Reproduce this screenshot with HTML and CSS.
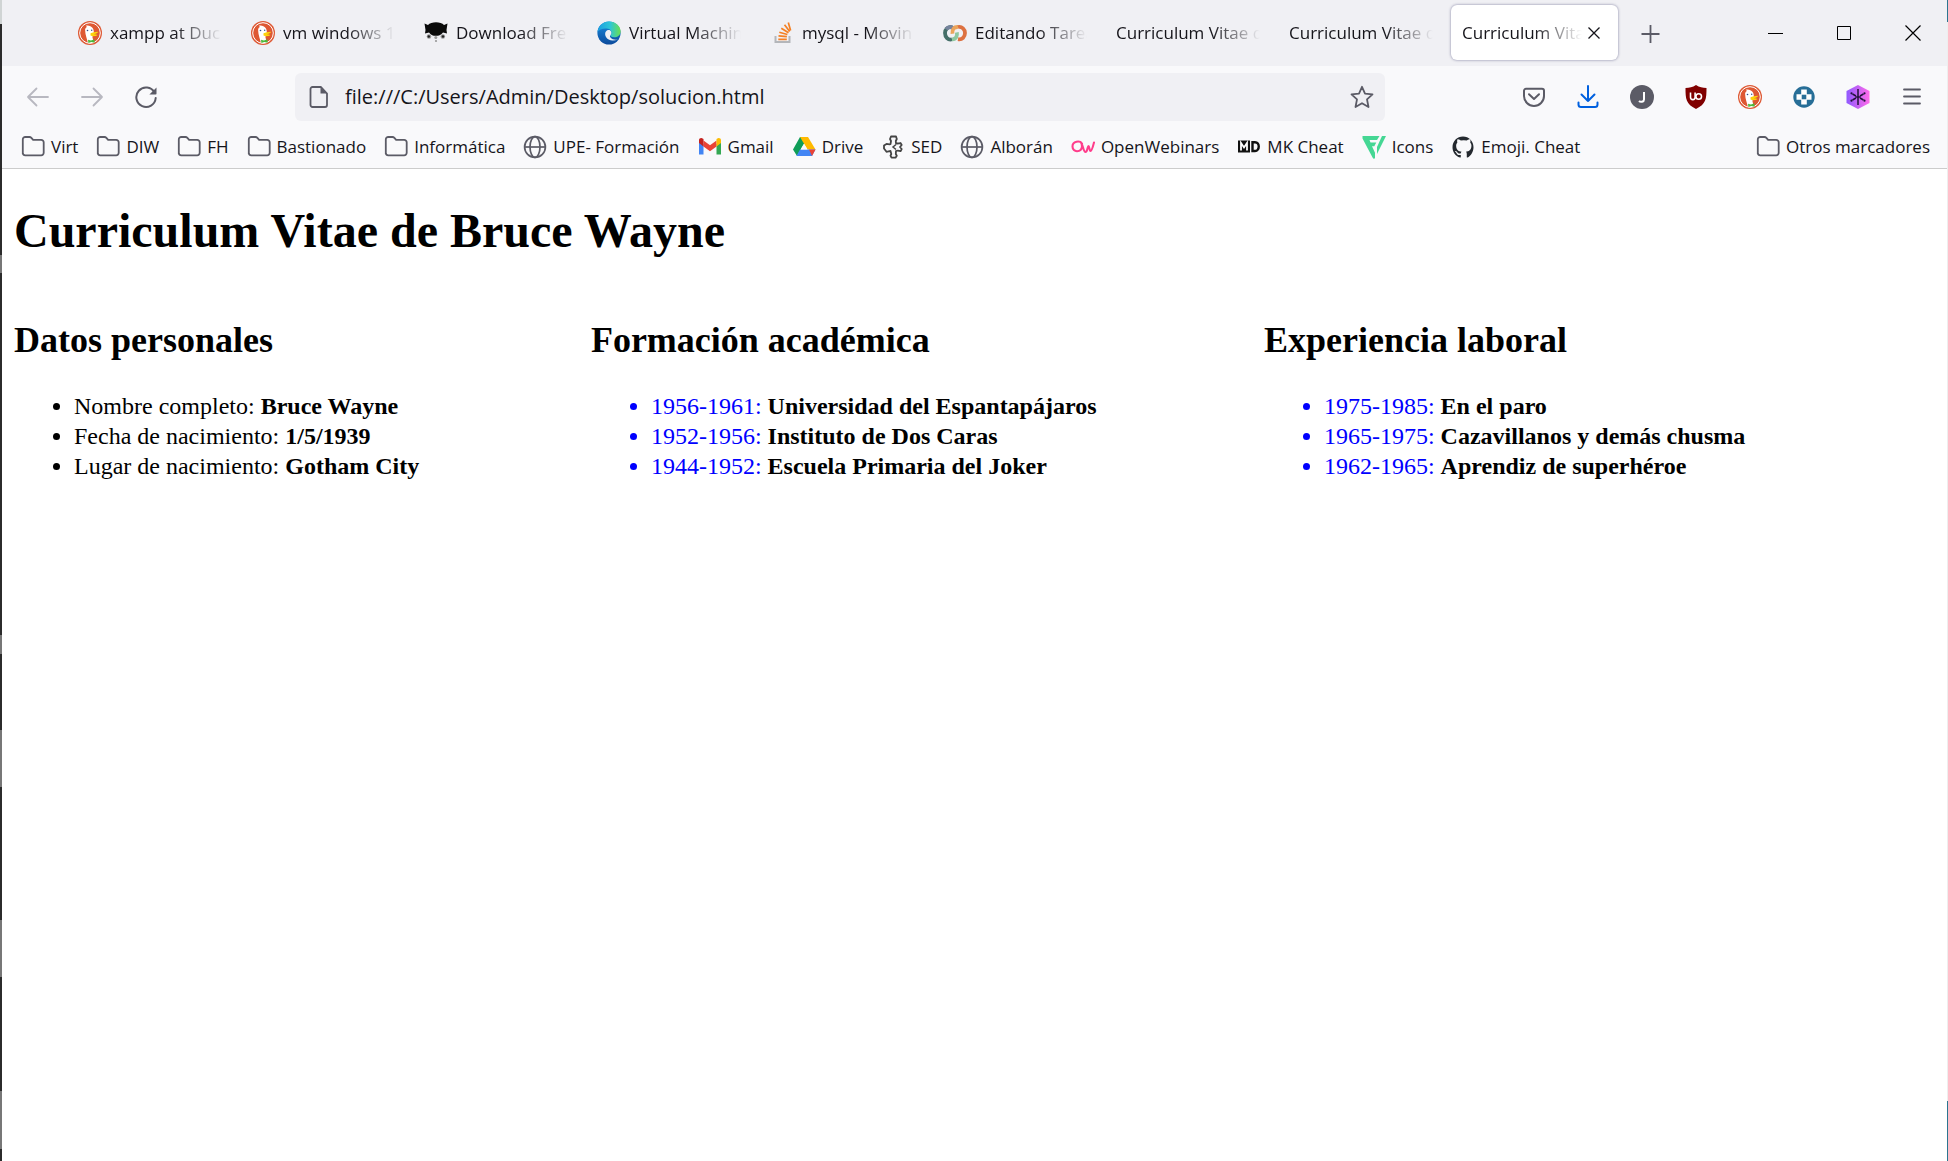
FILE: index.html
```html
<!DOCTYPE html>
<html lang="es">
<head>
<meta charset="utf-8">
<title>Curriculum Vitae de Bruce Wayne</title>
<link rel="stylesheet" href="styles.css">
</head>
<body>
<svg class="sprite" aria-hidden="true">
  <defs>
    <linearGradient id="edge-a" x1="0" y1="0" x2="1" y2="0"><stop offset="0" stop-color="#1b9de2"/><stop offset=".55" stop-color="#2fc6d6"/><stop offset="1" stop-color="#6be04f"/></linearGradient>
    <linearGradient id="edge-b" x1="0" y1="0" x2="0" y2="1"><stop offset="0" stop-color="#1a8ee0"/><stop offset="1" stop-color="#0c4a9c"/></linearGradient>
    <linearGradient id="hex" x1="0" y1="0" x2="1" y2="0"><stop offset="0" stop-color="#9059ff"/><stop offset="1" stop-color="#ff6bea"/></linearGradient>
  </defs>
  <symbol id="i-duck" viewBox="0 0 24 24">
    <circle cx="12" cy="12" r="12" fill="#de5833"/><circle cx="12" cy="12" r="10.3" fill="none" stroke="#fff" stroke-width="1"/>
    <path d="M10 22.2C9 18 7.200 13.500 7.200 10 6.800 8 7.600 6.500 9 6L7.800 4.700c2.700-.6 5.400.3 6.800 2.300 1 1.300 1.300 3 1.200 5l-1.400 4 1.500 6-3.400.3z" fill="#fff"/>
    <path d="M12.500 12.300c1.700-1 5-1 7.300-1.500.8.600-.9 1.800-4.300 2.500 2 .1 3.400.2 4 .7-1.500 1.500-5.200 1.500-7 .4z" fill="#fdd20a"/>
    <path d="M10 18.800l3 .8 3.400-1.400.2 3.600-3.300-.9-2.900 1z" fill="#4cba3c"/>
    <circle cx="9.500" cy="9.500" r=".8" fill="#2d4f8e"/><circle cx="13.700" cy="9.200" r=".7" fill="#2d4f8e"/>
  </symbol>
  <symbol id="i-folder" viewBox="0 0 24 24"><path d="M1.800 19V4.500a2.500 2.500 0 0 1 2.500-2.500h4.200c.8 0 1.400.3 1.900.8l1.700 2h8.100a2.500 2.500 0 0 1 2.500 2.500V17.800a2.500 2.500 0 0 1-2.500 2.500H4.300a2.500 2.500 0 0 1-2.500-2.500z" fill="none" stroke="#5b5b66" stroke-width="1.800"/></symbol>
  <symbol id="i-globe" viewBox="0 0 24 24"><g fill="none" stroke="#5b5b66" stroke-width="1.700"><circle cx="12" cy="12" r="10.400"/><ellipse cx="12" cy="12" rx="5" ry="10.400"/><path d="M1.600 12h20.800"/></g></symbol>
  <symbol id="i-close" viewBox="0 0 24 24"><path d="M6.500 6.500l11 11m0-11l-11 11" fill="none" stroke="#15141a" stroke-width="1.300"/></symbol>
</svg>

<header class="chrome">
  <div class="tabstrip">
    <div class="tabs" role="tablist" aria-label="Pestañas">
      <button class="tab" role="tab"><svg class="icon"><use href="#i-duck"/></svg><span class="tab-label">xampp at Duc</span></button>
      <button class="tab" role="tab"><svg class="icon"><use href="#i-duck"/></svg><span class="tab-label">vm windows 1</span></button>
      <button class="tab" role="tab"><svg class="icon" viewBox="0 0 24 24"><path d="M.5 2.500L4 4C7 .3 17 .3 20 4l3.500-1.500-1 6.500.5 3.500-4-1C16.500 14.500 13.500 15 12 14.800 10 15 7.500 14.500 5 11.500l-4 1L1.500 9z" fill="#0a0a0a"/><g fill="#999"><circle cx="5" cy="15.500" r="2.300"/><circle cx="11.800" cy="16.500" r="1.500"/><circle cx="18.800" cy="15.500" r="2.300"/><circle cx="12" cy="20" r="1.100"/></g><circle cx="4.800" cy="15.500" r="1.200" fill="#222"/><circle cx="19" cy="15.500" r="1.200" fill="#222"/></svg><span class="tab-label">Download Fre</span></button>
      <button class="tab" role="tab"><svg class="icon" viewBox="0 0 24 24"><circle cx="12" cy="12" r="11.600" fill="url(#edge-b)"/><path d="M.5 11C1.200 4.600 6.200.4 12 .4 18.500.4 23.600 5 23.600 10.200c0 4-3.200 6-6.300 6-3 0-4.300-1.200-3.600-2.200 1.600-2.300.8-6.300-4.200-6.600C5 7.200 1.800 9 .5 11z" fill="url(#edge-a)"/><path d="M13.500 14.300c2-2.700.3-5.700-2.300-5.200-3 .6-3.800 4-2.200 7 1.900 3.400 6.900 4.400 12.200 2.200-2.200.9-5.900.5-7.700-1.700-.7-.9-.6-1.600 0-2.300z" fill="#f0f0f4"/></svg><span class="tab-label">Virtual Machin</span></button>
      <button class="tab" role="tab"><svg class="icon" viewBox="0 0 24 24"><path d="M5.500 15v6h14v-6" fill="none" stroke="#b4b6ba" stroke-width="2"/><path d="M8.300 18.300h8.500M8.500 14.800l8.400.9M9.300 11.200l8.100 2.300M11.300 7.300l7.200 4.500M14.500 3.800l5.200 6.700M18.300 1.500l2.300 8" stroke="#f48024" stroke-width="1.700"/></svg><span class="tab-label">mysql - Movin</span></button>
      <button class="tab" role="tab"><svg class="icon" viewBox="0 0 24 24" fill="none" stroke-width="3.800"><path d="M9 18.300C5 19.500 2 15.900 2 12c0-3.600 3-7 7-5.600" stroke="#456f69"/><path d="M3 8.200C5 5.500 8 5.500 10 7" stroke="#75839c"/><path d="M9 18.300c4 .2 5.500-3.300 4.900-6.900" stroke="#8ec7a0"/><path d="M9.400 12.800C9 8.500 11 5.700 15 6" stroke="#eba45b"/><path d="M15 6c4-.8 7 2.300 7 6s-2.800 7-7 6.200" stroke="#dd7140"/></svg><span class="tab-label">Editando Tarea</span></button>
      <button class="tab" role="tab"><span class="tab-label">Curriculum Vitae d</span></button>
      <button class="tab" role="tab"><span class="tab-label">Curriculum Vitae d</span></button>
      <div class="tab tab-current"><button class="tab-main" role="tab" aria-selected="true"><span class="tab-label">Curriculum Vita</span></button><button class="tab-close" aria-label="Cerrar pestaña"><svg class="icon"><use href="#i-close"/></svg></button></div>
    </div>
    <button class="new-tab" aria-label="Nueva pestaña"><svg class="icon" viewBox="0 0 24 24"><path d="M12.500 4v18M3.500 13h18" stroke="#5b5b66" stroke-width="1.800"/></svg></button>
    <div class="window-controls">
      <button aria-label="Minimizar"><svg class="icon" viewBox="0 0 24 24"><path d="M5 12.500h15" stroke="#000"/></svg></button>
      <button aria-label="Maximizar"><svg class="icon" viewBox="0 0 24 24"><path d="M5.500 5.500h13v13h-13z" fill="none" stroke="#000"/></svg></button>
      <button aria-label="Cerrar"><svg class="icon" viewBox="0 0 24 24"><path d="M4.500 4.500l15 15m0-15l-15 15" stroke="#000" stroke-width="1.200"/></svg></button>
    </div>
  </div>

  <div class="toolbar">
    <button class="tool" aria-label="Atrás" disabled><svg class="icon" viewBox="0 0 24 24" fill="none" stroke="#b8b8c0" stroke-width="1.800" stroke-linecap="round" stroke-linejoin="round"><path d="M22 12H2m8.500-8.500L2 12l8.500 8.500"/></svg></button>
    <button class="tool" aria-label="Adelante" disabled><svg class="icon" viewBox="0 0 24 24" fill="none" stroke="#b8b8c0" stroke-width="1.800" stroke-linecap="round" stroke-linejoin="round"><path d="M2 12h20m-8.500-8.500L22 12l-8.500 8.500"/></svg></button>
    <button class="tool" aria-label="Recargar"><svg class="icon" viewBox="0 0 24 24"><path d="M20.500 7.500A9.700 9.700 0 1 0 21.700 13" fill="none" stroke="#5b5b66" stroke-width="2" stroke-linecap="round"/><path d="M22.500 2.500v6.300a.8.800 0 0 1-.8.800h-6.300z" fill="#5b5b66"/></svg></button>
    <div class="spring"></div>
    <div class="urlbar">
      <svg class="icon" viewBox="0 0 24 24"><path d="M5.500 2h8.500l6 6.500V20a2 2 0 0 1-2 2h-12.500a2 2 0 0 1-2-2V4a2 2 0 0 1 2-2z" fill="none" stroke="#5b5b66" stroke-width="1.800" stroke-linejoin="round"/><path d="M13.500 2v6.500h6.500z" fill="#5b5b66"/></svg>
      <input class="url" type="text" aria-label="Dirección" value="file:///C:/Users/Admin/Desktop/solucion.html">
      <button class="star" aria-label="Añadir a marcadores"><svg class="icon" viewBox="0 0 24 24"><path d="M12 1.800l3 6.800 7.500.8-5.500 5 1.500 7.600-6.500-3.800L5.500 22 7 14.400l-5.500-5 7.500-.8z" fill="none" stroke="#5b5b66" stroke-width="1.800" stroke-linejoin="round"/></svg></button>
    </div>
    <div class="spring"></div>
    <button class="tool" aria-label="Pocket"><svg class="icon" viewBox="0 0 24 24" fill="none" stroke="#5b5b66" stroke-width="2"><path d="M4 3.800h16a2 2 0 0 1 2 2V11a10 10 0 0 1-20 0V5.800a2 2 0 0 1 2-2z"/><path d="M7 9.300l5 4.700 5-4.700" stroke-linecap="round" stroke-linejoin="round"/></svg></button>
    <button class="tool" aria-label="Descargas"><svg class="icon" viewBox="0 0 24 24" fill="none" stroke="#0060df" stroke-width="2" stroke-linecap="round" stroke-linejoin="round"><path d="M12 1v15M5.500 9.500L12 16l6.500-6.500M2.500 17.500v2a2.500 2.500 0 0 0 2.500 2.500h14a2.500 2.500 0 0 0 2.500-2.500v-2"/></svg></button>
    <button class="tool" aria-label="Cuenta"><svg class="icon" viewBox="0 0 24 24"><circle cx="12" cy="12" r="12" fill="#5b5b66"/><path d="M14 7v7.500c0 2.500-3.500 3-5 1.500" fill="none" stroke="#fff" stroke-width="2"/></svg></button>
    <button class="tool" aria-label="uBlock Origin"><svg class="icon" viewBox="0 0 24 24"><path d="M12 0c3.500 2.200 6.500 3 10.500 3 0 11-.5 16-10.500 21C2 19 1.500 14 1.500 3 5.500 3 8.500 2.200 12 0z" fill="#800000"/><g fill="none" stroke="#fff" stroke-width="1.600"><path d="M6.500 7.500v4.800a2.300 2.300 0 0 0 4.600 0V7.500v6"/><circle cx="14.700" cy="11.500" r="2.800"/></g></svg></button>
    <button class="tool" aria-label="DuckDuckGo"><svg class="icon"><use href="#i-duck"/></svg></button>
    <button class="tool" aria-label="Contenedores"><svg class="icon" viewBox="0 0 24 24"><circle cx="12" cy="12" r="10.700" fill="#276e97"/><path d="M9.200 4.500h5.600v4.700h4.700v5.600h-4.700v4.700H9.200v-4.700H4.500V9.200h4.700z" fill="#fff"/><path d="M9.700 9.700h4.600v4.600H9.700z" fill="#276e97"/></svg></button>
    <button class="tool" aria-label="Extensión"><svg class="icon" viewBox="0 0 24 24"><path d="M12 0l11.500 6v12L12 24 .5 18V6z" fill="url(#hex)"/><path d="M12 4v16M6.500 9l3.500 2M17.500 9L14 11M6.500 15l3.500-2M17.500 15L14 13M9.500 12h5" stroke="#20123a" stroke-width="1.500"/><g fill="#20123a"><circle cx="5.500" cy="8.300" r="1.100"/><circle cx="18.500" cy="8.300" r="1.100"/><circle cx="5.500" cy="15.700" r="1.100"/><circle cx="18.500" cy="15.700" r="1.100"/></g></svg></button>
    <button class="tool" aria-label="Menú"><svg class="icon" viewBox="0 0 24 24"><path d="M4 4.500h16M4 11.500h16M4 18.500h16" stroke="#5b5b66" stroke-width="1.800" stroke-linecap="round"/></svg></button>
  </div>

  <nav class="bookmarks" aria-label="Marcadores">
    <a class="bookmark" href="#"><svg class="icon"><use href="#i-folder"/></svg>Virt</a>
    <a class="bookmark" href="#"><svg class="icon"><use href="#i-folder"/></svg>DIW</a>
    <a class="bookmark" href="#"><svg class="icon"><use href="#i-folder"/></svg>FH</a>
    <a class="bookmark" href="#"><svg class="icon"><use href="#i-folder"/></svg>Bastionado</a>
    <a class="bookmark" href="#"><svg class="icon"><use href="#i-folder"/></svg>Informática</a>
    <a class="bookmark" href="#"><svg class="icon"><use href="#i-globe"/></svg>UPE- Formación</a>
    <a class="bookmark" href="#"><svg class="icon" viewBox="0 0 24 24"><path d="M1 6v13.500h4.500V9z" fill="#4285f4"/><path d="M18.500 9v10.500H23V6z" fill="#34a853"/><path d="M5.500 5.500v6L12 16.300l6.500-4.800v-6L12 10.300z" fill="#ea4335"/><path d="M1 5.300C1 3 3.500 2.500 5 3.700l.5.400v7.400L1 8z" fill="#c5221f"/><path d="M23 5.300C23 3 20.500 2.500 19 3.700l-.5.400v7.400L23 8z" fill="#fbbc04"/></svg>Gmail</a>
    <a class="bookmark" href="#"><svg class="icon" viewBox="0 0 24 24"><path d="M8 2h8l-4 6.800-7 12.200-4-6.500z" fill="#0f9d58"/><path d="M8 2h8l7.500 12.500h-8z" fill="#ffba00"/><path d="M8 14.500h15.500L20 21H4.500z" fill="#4285f4"/><path d="M17 14.500h6.500L20 21z" fill="#ea4335"/><path d="M12 8.800l-3.500 5.700h7z" fill="#f9f9fb"/></svg>Drive</a>
    <a class="bookmark" href="#"><svg class="icon" viewBox="0 0 24 24"><path d="M10 1.500h5l.8 2.500-1 2 .2 2.500c2 0 3 .2 4.500-.5l1.200 2-1.700 2 1.700 2-1.200 2.200c-2-.7-3-.7-4.500-.2l-.2 3 1 1.700-1.300 2h-4l-1-2 .8-1.700-.8-3c-1.500 0-2.300.8-4 .8L3 13.500v-3L5.500 9c1.500 0 2.500.5 4 .2L10 6 9 4z" fill="none" stroke="#444" stroke-width="1.800" stroke-linejoin="round"/><path d="M15 9.500l-3 2.500 3 2.500" fill="none" stroke="#444" stroke-width="1.500"/></svg>SED</a>
    <a class="bookmark" href="#"><svg class="icon"><use href="#i-globe"/></svg>Alborán</a>
    <a class="bookmark" href="#"><svg class="icon" viewBox="0 0 24 24"><path d="M11 8.500C9 5.500 1.500 5.800 1.500 11.500c0 6.500 9 6 9.500 0 0-1.800-.4-3-1-4 2 2.500 2.500 9.500 4.500 9.500s2-6 3-6 .8 5 2 5S22 11.500 23 7.500" fill="none" stroke="#ff3d8b" stroke-width="2.100" stroke-linecap="round"/></svg>OpenWebinars</a>
    <a class="bookmark" href="#"><svg class="icon" viewBox="0 0 24 24"><path d="M1 5.500h12v12H1z" fill="#111"/><path d="M4 15.500V8l3 4.500L10 8v7.500" fill="none" stroke="#fff" stroke-width="1.800"/><path d="M15.500 7.200h2.500c5 0 5 8.800 0 8.800h-2.500z" fill="none" stroke="#111" stroke-width="2.400"/></svg>MK Cheat</a>
    <a class="bookmark" href="#"><svg class="icon" viewBox="0 0 24 24"><path d="M.5 1h17l-2.500 4H7.500l1 2.500h5.800l-2 3.700H10l3 6.500v5.500c-.8.800-1.800.6-2.300-.4L.5 3.500z" fill="#45d794"/><path d="M20 1h4l-9 18v-7z" fill="#45d794"/></svg>Icons</a>
    <a class="bookmark" href="#"><svg class="icon" viewBox="0 0 16 16"><path fill="#24292f" d="M8 1C4.130 1 1 4.130 1 8.100c0 3.300 2 5.900 4.970 6.900.4.070.55-.17.550-.38v-1.300c-2.010.37-2.530-.49-2.690-.94-.09-.23-.48-.94-.82-1.130-.28-.15-.68-.52-.01-.53.63-.01 1.080.58 1.230.82.720 1.210 1.870.87 2.330.66.070-.52.280-.87.510-1.070-1.780-.2-3.640-.89-3.640-3.950 0-.87.310-1.590.820-2.150-.08-.2-.36-1.020.080-2.120 0 0 .67-.21 2.200.820a7.600 7.600 0 0 1 4 0c1.530-1.040 2.200-.82 2.200-.82.440 1.100.160 1.920.080 2.120.51.560.820 1.270.820 2.150 0 3.070-1.870 3.750-3.650 3.950.290.250.540.730.540 1.480v2.010c0 .21.150.460.550.380C13 14 15 11.400 15 8.100 15 4.130 11.870 1 8 1z"/></svg>Emoji. Cheat</a>
    <a class="bookmark bookmark-other" href="#"><svg class="icon"><use href="#i-folder"/></svg>Otros marcadores</a>
  </nav>
</header>

<main class="page">
  <h1>Curriculum Vitae de Bruce Wayne</h1>
  <div class="columns">
    <section>
      <h2>Datos personales</h2>
      <ul>
        <li>Nombre completo: <b>Bruce Wayne</b></li>
        <li>Fecha de nacimiento: <b>1/5/1939</b></li>
        <li>Lugar de nacimiento: <b>Gotham City</b></li>
      </ul>
    </section>
    <section>
      <h2>Formación académica</h2>
      <ul class="dated">
        <li>1956-1961: <b>Universidad del Espantapájaros</b></li>
        <li>1952-1956: <b>Instituto de Dos Caras</b></li>
        <li>1944-1952: <b>Escuela Primaria del Joker</b></li>
      </ul>
    </section>
    <section>
      <h2>Experiencia laboral</h2>
      <ul class="dated">
        <li>1975-1985: <b>En el paro</b></li>
        <li>1965-1975: <b>Cazavillanos y demás chusma</b></li>
        <li>1962-1965: <b>Aprendiz de superhéroe</b></li>
      </ul>
    </section>
  </div>
</main>
</body>
</html>
```

FILE: styles.css
```css
* { box-sizing: border-box; }

/* The body shows through as the thin window edges left and right. */
body {
  margin: 0;
  padding: 0 1px 0 2px;
  min-height: 100vh;
  display: flex;
  flex-direction: column;
  background:
    linear-gradient(#d0d4d4 24px, #2b2b2b 24px 255px, #777 255px 273px, #2b2b2b 273px 635px, #777 635px 654px, #2b2b2b 654px 730px, #777 730px 787px, #2b2b2b 787px 920px, #777 920px 977px, #2b2b2b 977px 1091px, #777 1091px 1149px, #2b2b2b 1149px) left / 2px 100% no-repeat,
    linear-gradient(#2b7590 22px, #eeeeee 22px 1101px, #2b7590 1101px) right / 1px 100% no-repeat;
}

button, input {
  margin: 0;
  padding: 0;
  border: 0;
  background: none;
  color: inherit;
  font: inherit;
}

.sprite { position: absolute; width: 0; height: 0; }
.icon { display: block; flex: none; width: 24px; height: 24px; }

.chrome {
  color: #15141a;
  background: #f9f9fb;
  border-bottom: 1px solid #cccccc;
  font-family: "Open Sans", "Noto Sans", sans-serif;
  font-size: 17px;
  line-height: 24px;
}

/* Tabs */
.tabstrip { display: flex; height: 66px; background: #f0f0f4; }
.tabs { display: flex; flex: 0 1 auto; min-width: 0; padding-left: 62px; }
.tab {
  display: flex;
  align-items: center;
  flex: 0 1 173px;
  width: 173px;
  min-width: 0;
  gap: 8px;
  padding: 0 15px 0 14px;
}
.tab-label {
  flex: 1;
  min-width: 0;
  overflow: hidden;
  white-space: nowrap;
  text-align: left;
  -webkit-mask-image: linear-gradient(to left, transparent, #000 48px);
  mask-image: linear-gradient(to left, transparent, #000 48px);
}
.tab-current {
  gap: 0;
  margin: 5px 3px 6px;
  flex-basis: 167px;
  padding: 0 12px 0 11px;
  border-radius: 6px;
  background: #ffffff;
  box-shadow: 0 0 3px #8080a0;
}
.tab-main { display: flex; flex: 1; min-width: 0; }
.new-tab { display: flex; align-items: center; justify-content: center; flex: none; width: 58px; }
.window-controls { display: flex; flex: none; margin-left: auto; }
.window-controls button { display: flex; align-items: center; justify-content: center; width: 69px; }

/* Navigation toolbar */
.toolbar { display: flex; align-items: center; height: 60px; padding: 2px 8px 0 9px; }
.tool { display: flex; align-items: center; justify-content: center; flex: none; width: 54px; height: 48px; }
.spring { flex: 122; }
.urlbar {
  display: flex;
  align-items: center;
  flex: 1067;
  gap: 14px;
  height: 48px;
  padding: 0 11px 0 12px;
  border-radius: 6px;
  background: #f0f0f4;
}
.url { flex: 1; min-width: 0; font-size: 20px; outline: 0; }

/* Bookmarks */
.bookmarks { display: flex; gap: 18px; height: 42px; padding: 0 17px 0 19px; }
.bookmark { display: flex; align-items: center; gap: 6px; color: inherit; text-decoration: none; white-space: nowrap; }
.bookmark-other { margin-left: auto; }

/* Document */
.page {
  flex: 1;
  padding: 34px 10px 12px 12px;
  background: #ffffff;
  color: #000000;
  font-family: "Liberation Serif", "Times New Roman", serif;
  font-size: 24px;
  line-height: 30px;
}
h1 { margin: 0 0 60px; font-size: 48px; line-height: 56px; }
h2 { margin: 0 0 30px; font-size: 36px; line-height: 42px; }
ul { margin: 0; padding-left: 60px; }
.columns { display: grid; grid-template-columns: 30% 35% 35%; }
.dated { color: #0000ff; }
.dated b { color: #000000; }
```
